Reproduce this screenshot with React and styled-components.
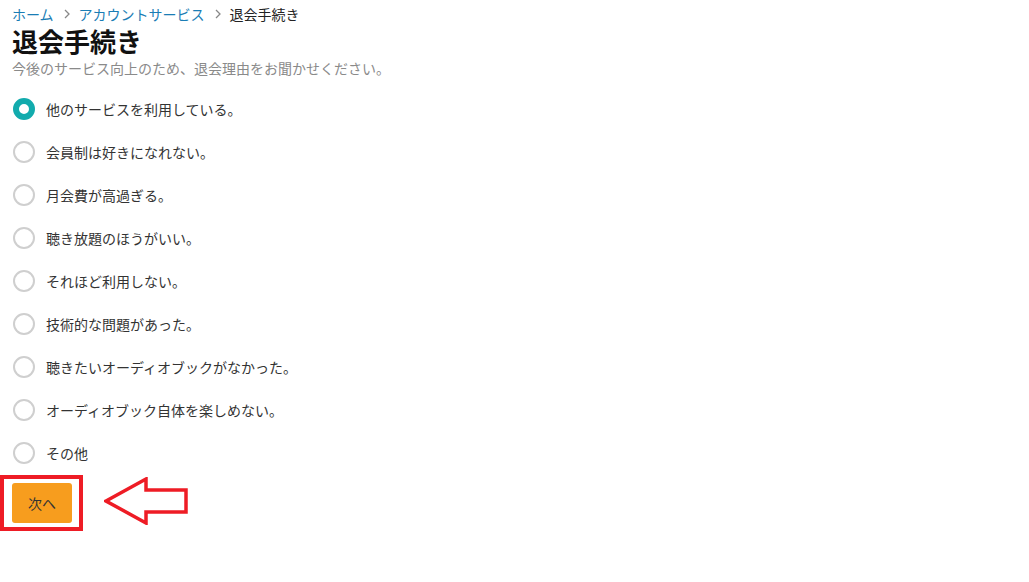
import React, { useState } from "react";
import styled, { createGlobalStyle } from "styled-components";

const GlobalStyle = createGlobalStyle`
  html, body {
    margin: 0;
    padding: 0;
    background: #fff;
  }
  body {
    font-family: "Noto Sans CJK JP", "Noto Sans", sans-serif;
    color: #222;
  }
`;

const Page = styled.div`
  display: flex;
  flex-direction: column;
  padding: 4px 12px;
`;

const Breadcrumb = styled.nav`
  display: flex;
  align-items: center;
  height: 20px;
  font-size: 14px;
  line-height: 18px;
  color: #222;
  a {
    color: #1a7db5;
    text-decoration: none;
  }
`;

const Sep = styled.svg`
  width: 6px;
  height: 10px;
  margin: 0 9px 0 10px;
`;

const Title = styled.h1`
  margin: 3px 0 0;
  font-size: 26px;
  line-height: 28px;
  font-weight: 700;
  color: #111;
`;

const Lead = styled.p`
  margin: 3px 0 0;
  font-size: 14px;
  line-height: 20px;
  color: #8a8a8a;
`;

const List = styled.div`
  display: flex;
  flex-direction: column;
  margin-top: 9px;
`;

const Option = styled.label`
  display: flex;
  align-items: center;
  gap: 11px;
  height: 43px;
  font-size: 14px;
  color: #333;
  cursor: pointer;
`;

const Dot = styled.span`
  box-sizing: border-box;
  width: 22px;
  height: 22px;
  margin-left: 1px;
  border-radius: 50%;
  border: ${(p) => (p.checked ? "6.5px solid #12abad" : "2px solid #cfcfcf")};
  background: #fff;
`;

const Footer = styled.div`
  display: flex;
  align-items: center;
  gap: 21px;
  margin-left: -12px;
  margin-top: 1px;
`;

const Mark = styled.div`
  display: flex;
  padding: 4px 7px 4px 8px;
  border: 4px solid #ee1c25;
`;

const NextButton = styled.button`
  width: 60px;
  height: 40px;
  border: none;
  border-radius: 3px;
  background: #f79d1e;
  color: #333;
  font-family: inherit;
  font-size: 14px;
  cursor: pointer;
`;

const Arrow = styled.svg`
  width: 86px;
  height: 48px;
  margin-top: -5px;
`;

const reasons = [
  "他のサービスを利用している。",
  "会員制は好きになれない。",
  "月会費が高過ぎる。",
  "聴き放題のほうがいい。",
  "それほど利用しない。",
  "技術的な問題があった。",
  "聴きたいオーディオブックがなかった。",
  "オーディオブック自体を楽しめない。",
  "その他",
];

function Chevron() {
  return (
    <Sep viewBox="0 0 6 10">
      <path d="M1 1l4 4-4 4" fill="none" stroke="#888" strokeWidth="1.3" />
    </Sep>
  );
}

export default function App() {
  const [selected, setSelected] = useState(0);

  return (
    <Page>
      <GlobalStyle />
      <Breadcrumb>
        <a href="#">ホーム</a>
        <Chevron />
        <a href="#">アカウントサービス</a>
        <Chevron />
        <span>退会手続き</span>
      </Breadcrumb>
      <Title>退会手続き</Title>
      <Lead>今後のサービス向上のため、退会理由をお聞かせください。</Lead>
      <List>
        {reasons.map((r, i) => (
          <Option key={r} onClick={() => setSelected(i)}>
            <Dot checked={selected === i} />
            {r}
          </Option>
        ))}
      </List>
      <Footer>
        <Mark>
          <NextButton>次へ</NextButton>
        </Mark>
        <Arrow viewBox="0 0 86 48">
          <polygon
            points="2,24 42,2 42,13 82,13 82,35 42,35 42,46"
            fill="none"
            stroke="#ee1c25"
            strokeWidth="3.5"
            strokeLinejoin="miter"
          />
        </Arrow>
      </Footer>
    </Page>
  );
}
